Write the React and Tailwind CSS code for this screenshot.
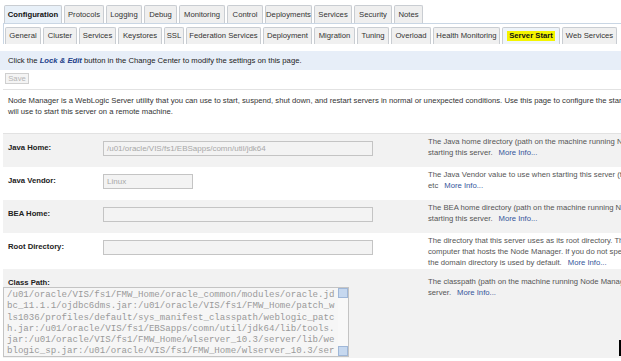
import React from "react";

const topTabs = [
  ["Configuration", 58, true],
  ["Protocols", 40],
  ["Logging", 36],
  ["Debug", 33],
  ["Monitoring", 46],
  ["Control", 36],
  ["Deployments", 47],
  ["Services", 38],
  ["Security", 38],
  ["Notes", 29],
];

const subTabs = [
  ["General", 36],
  ["Cluster", 34],
  ["Services", 37],
  ["Keystores", 44],
  ["SSL", 20],
  ["Federation Services", 75],
  ["Deployment", 49],
  ["Migration", 41],
  ["Tuning", 32],
  ["Overload", 40],
  ["Health Monitoring", 67],
  ["Server Start", 58, true],
  ["Web Services", 55],
];

const classPath = [
  "/u01/oracle/VIS/fs1/FMW_Home/oracle_common/modules/oracle.jd",
  "bc_11.1.1/ojdbc6dms.jar:/u01/oracle/VIS/fs1/FMW_Home/patch_w",
  "ls1036/profiles/default/sys_manifest_classpath/weblogic_patc",
  "h.jar:/u01/oracle/VIS/fs1/EBSapps/comn/util/jdk64/lib/tools.",
  "jar:/u01/oracle/VIS/fs1/FMW_Home/wlserver_10.3/server/lib/we",
  "blogic_sp.jar:/u01/oracle/VIS/fs1/FMW_Home/wlserver_10.3/ser",
];

function More() {
  return <span className="text-[#34559a] ml-[6px]">More Info...</span>;
}

function Desc({ lines }) {
  return (
    <div className="min-w-0 flex-1 overflow-hidden pl-[3px] pt-[2px] text-[#555] leading-[11px] whitespace-nowrap">
      {lines.map((l, i) => (
        <div key={i}>{l}</div>
      ))}
    </div>
  );
}

function Row({ bg, h, label, input, desc }) {
  return (
    <div className={`flex ${bg} ${h}`}>
      <div className="w-[100px] shrink-0 pl-[5px] pt-[8px] font-bold text-[#222] whitespace-nowrap">{label}</div>
      <div className="w-[322px] shrink-0 pt-[7px]">{input}</div>
      <Desc lines={desc} />
    </div>
  );
}

function Input({ w, value }) {
  return (
    <div className={`${w} h-[15px] border border-[#c4c4c4] bg-[#f3f3f3] text-[#a8a8a8] pl-[3px] leading-[13px] text-[8px]`}>
      {value}
    </div>
  );
}

export default function App() {
  return (
    <div className="relative w-[621px] h-[361px] overflow-hidden bg-white font-['Liberation_Sans',sans-serif] text-[7.7px] text-[#222]">
      <div className="flex gap-[2px] pl-[4px] pt-[5px] h-[23px]">
        {topTabs.map(([t, w, sel]) => (
          <div
            key={t}
            style={{ width: w }}
            className={`h-[18px] shrink-0 flex items-center justify-center border border-b-0 border-[#c9cdd2] rounded-t-[2px] ${
              sel ? "bg-[#e8f0f8] font-bold text-[#111]" : "bg-[#efefef] text-[#333]"
            }`}
          >
            {t}
          </div>
        ))}
      </div>
      <div className="ml-[3px] border-t border-l border-[#c9d6e4] pt-[3px] pl-[1px] flex gap-[2px] h-[21px]">
        {subTabs.map(([t, w, sel]) => (
          <div
            key={t}
            style={{ width: w }}
            className={`h-[17px] shrink-0 flex items-center justify-center border border-b-0 border-[#c9cdd2] rounded-t-[2px] whitespace-nowrap ${
              sel ? "bg-[#eef4fa] font-bold text-[#111]" : "bg-[#f0f0f0] text-[#333]"
            }`}
          >
            {sel ? <span className="bg-[#f4f400] px-[2px] leading-[10px]">{t}</span> : t}
          </div>
        ))}
      </div>
      <div className="mt-[7px] h-[19px] bg-[#e7eef8] flex items-center pl-[8px] text-[#222]">
        Click the&nbsp;<span className="font-bold italic text-[#23418a]">Lock &amp; Edit</span>&nbsp;button in the Change Center to modify the settings on this page.
      </div>
      <div className="pl-[5px] pt-[3px] h-[19px]">
        <div className="w-[24px] h-[11px] border border-[#cfcfcf] bg-[#f4f4f4] text-[#b4b4b4] flex items-center justify-center">
          Save
        </div>
      </div>
      <div className="ml-[3px] border-t border-[#e2e2e2] h-[44px] pt-[5px] pl-[5px] leading-[11px] whitespace-nowrap overflow-hidden text-[#333]">
        <div>Node Manager is a WebLogic Server utility that you can use to start, suspend, shut down, and restart servers in normal or unexpected conditions. Use this page to configure the startup settings that Node Manager</div>
        <div>will use to start this server on a remote machine.</div>
      </div>
      <div className="ml-[3px] border-t border-[#e2e2e2]">
        <Row
          bg="bg-[#f2f2f2]"
          h="h-[33px]"
          label="Java Home:"
          input={<Input w="w-[270px]" value="/u01/oracle/VIS/fs1/EBSapps/comn/util/jdk64" />}
          desc={["The Java home directory (path on the machine running Node Manager) to use when", <>starting this server.<More /></>]}
        />
        <Row
          bg="bg-white"
          h="h-[33px]"
          label="Java Vendor:"
          input={<Input w="w-[90px]" value="Linux" />}
          desc={["The Java Vendor value to use when starting this server (for example, BEA, Sun, HP,", <>etc<More /></>]}
        />
        <Row
          bg="bg-[#f2f2f2]"
          h="h-[33px]"
          label="BEA Home:"
          input={<Input w="w-[270px]" value="" />}
          desc={["The BEA home directory (path on the machine running Node Manager) to use when", <>starting this server.<More /></>]}
        />
        <Row
          bg="bg-white"
          h="h-[36px]"
          label="Root Directory:"
          input={<Input w="w-[270px]" value="" />}
          desc={[
            "The directory that this server uses as its root directory. This directory must be on the",
            "computer that hosts the Node Manager. If you do not specify a Root Directory value,",
            <>the domain directory is used by default.<More /></>,
          ]}
        />
        <div className="flex bg-[#f2f2f2] h-[89px] pt-[5px]">
          <div className="w-[422px] shrink-0">
            <div className="font-bold text-[#222] pl-[5px] pt-[3px] h-[13px]">Class Path:</div>
            <div className="w-[346px] h-[70px] border border-[#c4c4c4] bg-[#f6f6f6] flex">
              <div className="flex-1 pl-[3px] pt-[1px] font-['Liberation_Mono',monospace] text-[9.1px] leading-[11.3px] text-[#9a9a9a] whitespace-nowrap overflow-hidden">
                {classPath.map((l) => (
                  <div key={l}>{l}</div>
                ))}
              </div>
              <div className="w-[10px] shrink-0 flex flex-col justify-between bg-[#f8f8f8]">
                <div className="h-[10px] bg-[#c6d8ef] border border-[#9fb7d8]" />
                <div className="h-[10px] bg-[#c6d8ef] border border-[#9fb7d8]" />
              </div>
            </div>
          </div>
          <Desc lines={["The classpath (path on the machine running Node Manager) to use when starting this", <>server.<More /></>]} />
        </div>
      </div>
      <div className="absolute right-0 top-[340px] w-[2px] h-[16px] bg-black" />
    </div>
  );
}
